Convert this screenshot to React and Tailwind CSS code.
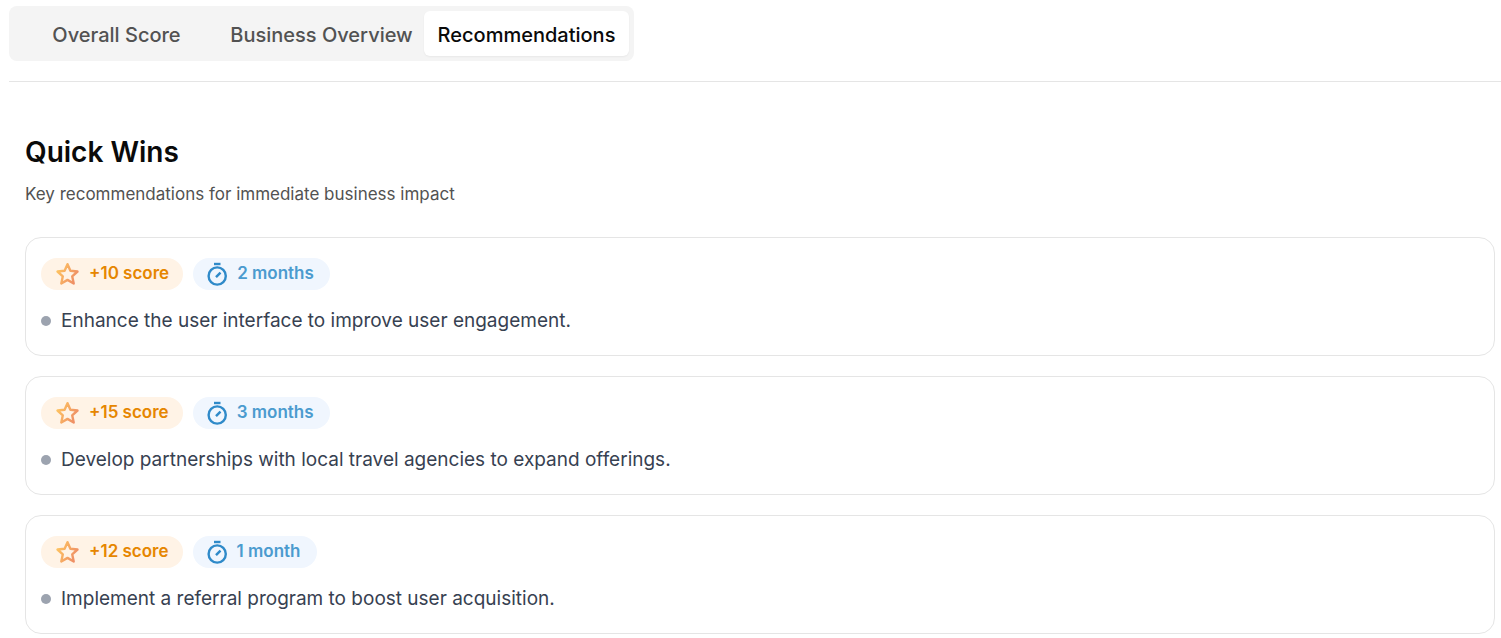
import { useState } from "react";

const tabs = ["Overall Score", "Business Overview", "Recommendations"];

const items = [
  { score: "+10 score", time: "2 months", text: "Enhance the user interface to improve user engagement." },
  { score: "+15 score", time: "3 months", text: "Develop partnerships with local travel agencies to expand offerings." },
  { score: "+12 score", time: "1 month", text: "Implement a referral program to boost user acquisition." },
];

function StarIcon({ id }) {
  return (
    <svg className="h-6 w-6 shrink-0" viewBox="0 0 24 24" fill="none" aria-hidden="true">
      <defs>
        <linearGradient id={id} x1="1" y1="6" x2="23" y2="17" gradientUnits="userSpaceOnUse">
          <stop stopColor="#ffc860" />
          <stop offset="1" stopColor="#ed8a66" />
        </linearGradient>
      </defs>
      <path
        d="M12.500 2.200l2.900 6.500 7.100 .8-5.300 4.800 1.500 7.200-6.200-3.600-6.200 3.600 1.500-7.200L2.500 9.500l7.100-.8L12.500 2.200z"
        stroke={`url(#${id})`}
        strokeWidth="2.4"
        strokeLinejoin="round"
      />
    </svg>
  );
}

function TimerIcon() {
  return (
    <svg className="h-6 w-6 shrink-0" viewBox="0 0 24 24" fill="none" stroke="#2f8ac9" strokeWidth="2.400" aria-hidden="true">
      <path d="M9 2h6.500" />
      <circle cx="12.200" cy="14" r="8.600" />
      <path d="M11 15.200l4.500-4.500" />
    </svg>
  );
}

export default function App() {
  const [active, setActive] = useState("Recommendations");
  return (
    <main className="bg-white pt-1.5 pl-[9px] font-['Inter',sans-serif]">
      <div className="border-b border-[#e5e5e5] pb-5">
        <div role="tablist" className="grid w-[625px] grid-cols-3 rounded-lg bg-[#f4f4f4] p-[5px]">
          {tabs.map((tab) => (
            <button
              key={tab}
              type="button"
              role="tab"
              aria-selected={tab === active}
              onClick={() => setActive(tab)}
              className={`h-[45px] rounded-md pt-0.5 text-center text-[20px] font-medium whitespace-nowrap ${
                tab === active ? "bg-white text-[#0a0a0a] shadow-xs" : "text-[#525252]"
              }`}
            >
              {tab}
            </button>
          ))}
        </div>
      </div>

      <section className="pt-[50px] pr-1.5 pl-4">
        <h1 className="text-[28px] leading-10 font-semibold text-[#0a0a0a]">Quick Wins</h1>
        <p className="mt-2.5 text-[17px] leading-6 text-[#525252]">Key recommendations for immediate business impact</p>
        <ul className="mt-[31px] flex flex-col gap-5">
          {items.map((item, i) => (
            <li key={item.text} className="rounded-2xl border border-[#e5e5e5] px-[15px] py-5">
              <div className="flex gap-2.5">
                <span className="flex h-8 items-center gap-2.5 rounded-full bg-[#fff3e6] px-3.5 text-[17px] font-semibold text-[#e68600]">
                  <StarIcon id={`star-${i}`} />
                  {item.score}
                </span>
                <span className="flex h-8 items-center gap-2 rounded-full bg-[#f0f6fe] pr-4 pl-3 text-[17px] font-semibold text-[#4b9bcf]">
                  <TimerIcon />
                  {item.time}
                </span>
              </div>
              <div className="mt-4 flex items-center gap-2.5">
                <span className="h-2.5 w-2.5 shrink-0 rounded-full bg-[#9ca3af]" />
                <p className="text-[19px] leading-[29px] text-[#374151]">{item.text}</p>
              </div>
            </li>
          ))}
        </ul>
      </section>
    </main>
  );
}
